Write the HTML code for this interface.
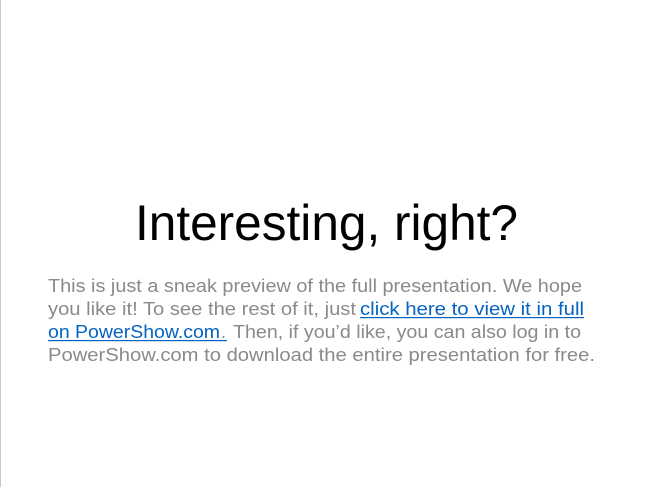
<!DOCTYPE html>
<html><head><meta charset="utf-8"><style>
html,body{margin:0;padding:0;background:#fff;width:650px;height:487px;overflow:hidden}
svg{display:block}
</style></head><body>
<svg width="650" height="487" viewBox="0 0 650 487" xmlns="http://www.w3.org/2000/svg" font-family="Liberation Sans, sans-serif">
<rect x="0" y="0" width="1" height="487" fill="#c8c8c8"/>
<text x="135" y="240" font-size="50" fill="#000" textLength="383" lengthAdjust="spacingAndGlyphs">Interesting, right?</text>
<g font-size="18" fill="#8a8a8a">
<text x="48" y="292" textLength="534" lengthAdjust="spacingAndGlyphs">This is just a sneak preview of the full presentation. We hope</text>
<text x="48" y="315" textLength="308" lengthAdjust="spacingAndGlyphs">you like it! To see the rest of it, just</text>
<text x="360" y="315" fill="#0563c1" textLength="224" lengthAdjust="spacingAndGlyphs">click here to view it in full</text>
<rect x="360" y="317" width="224" height="1.2" fill="#0563c1"/>
<text x="48" y="338" fill="#0563c1" textLength="172" lengthAdjust="spacingAndGlyphs">on PowerShow.com</text>
<text x="221" y="338">.</text>
<rect x="48" y="340" width="179" height="1.2" fill="#0563c1"/>
<text x="233" y="338" textLength="348" lengthAdjust="spacingAndGlyphs">Then, if you’d like, you can also log in to</text>
<text x="48" y="361" textLength="547" lengthAdjust="spacingAndGlyphs">PowerShow.com to download the entire presentation for free.</text>
</g>
</svg>
</body></html>
